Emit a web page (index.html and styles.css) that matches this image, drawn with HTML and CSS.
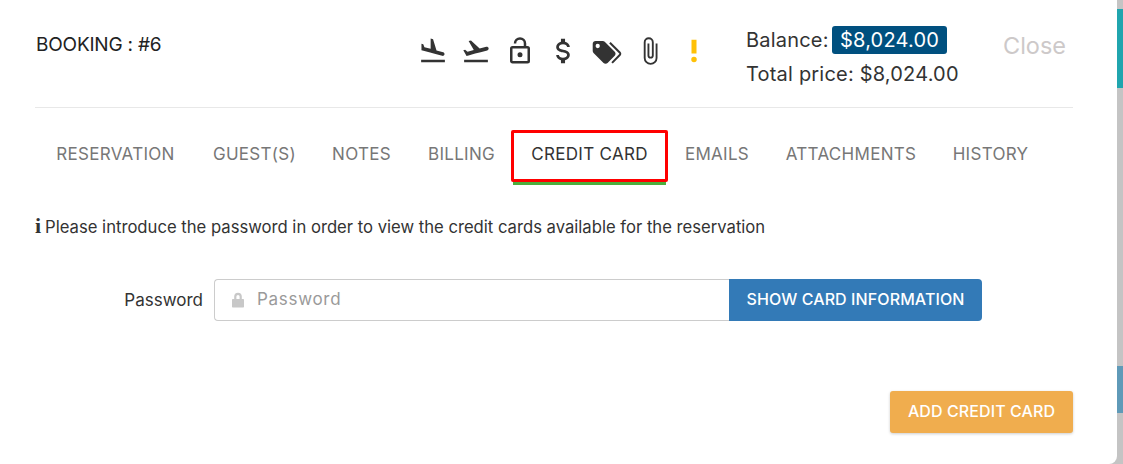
FILE: index.html
```html
<!DOCTYPE html>
<html lang="en">
<head>
    <meta charset="UTF-8">
    <title>Booking #6</title>
    <link rel="stylesheet" href="styles.css">
</head>
<body>
    <div class="page">
        <div class="modal">
            <div class="modal-header">
                <div class="booking-title">BOOKING : #6</div>
                <div class="status-icons">
                    <svg class="icon" viewBox="0 0 24 24"><path d="M2.5,19H21.5V21H2.5V19M9.68,13.27L14.03,14.43L19.34,15.85C20.14,16.06 20.96,15.59 21.18,14.79C21.39,14 20.92,13.17 20.12,12.95L14.81,11.53L12.05,2.5L10.12,2V10.28L5.15,8.95L4.22,6.63L2.77,6.24V11.41L4.37,11.84L9.68,13.27Z"/></svg>
                    <svg class="icon" viewBox="0 0 24 24"><path d="M2.5,19H21.5V21H2.5V19M22.07,9.64C21.86,8.84 21.03,8.36 20.23,8.58L14.92,10L8,3.57L6.09,4.08L10.23,11.25L5.26,12.58L3.29,11.04L1.84,11.43L3.66,14.59L4.43,15.92L6.03,15.5L11.34,14.07L15.69,12.91L21,11.5C21.81,11.26 22.28,10.44 22.07,9.64Z"/></svg>
                    <svg class="icon" viewBox="0 0 24 24"><path d="M18,20V10H6V20H18M18,8A2,2 0 0,1 20,10V20A2,2 0 0,1 18,22H6C4.89,22 4,21.1 4,20V10A2,2 0 0,1 6,8H15V6A3,3 0 0,0 12,3A3,3 0 0,0 9,6H7A5,5 0 0,1 12,1A5,5 0 0,1 17,6V8H18M12,17A2,2 0 0,1 10,15A2,2 0 0,1 12,13A2,2 0 0,1 14,15A2,2 0 0,1 12,17Z"/></svg>
                    <svg class="icon" viewBox="1 1 22 22"><path d="M7,15H9C9,16.08 10.37,17 12,17C13.63,17 15,16.08 15,15C15,13.9 13.96,13.5 11.76,12.97C9.64,12.44 7,11.78 7,9C7,7.21 8.47,5.69 10.5,5.18V3H13.5V5.18C15.53,5.69 17,7.21 17,9H15C15,7.92 13.63,7 12,7C10.37,7 9,7.92 9,9C9,10.1 10.04,10.5 12.24,11.03C14.36,11.56 17,12.22 17,15C17,16.79 15.53,18.31 13.5,18.82V21H10.5V18.82C8.47,18.31 7,16.79 7,15Z"/></svg>
                    <svg class="icon" viewBox="1.5 0.5 21 21"><path d="M5.5,9A1.5,1.5 0 0,0 7,7.5A1.5,1.5 0 0,0 5.5,6A1.5,1.5 0 0,0 4,7.5A1.5,1.5 0 0,0 5.5,9M17.41,11.58C17.77,11.94 18,12.44 18,13C18,13.55 17.78,14.05 17.41,14.41L12.41,19.41C12.05,19.77 11.55,20 11,20C10.45,20 9.95,19.78 9.58,19.41L2.59,12.42C2.22,12.05 2,11.55 2,11V6C2,4.89 2.89,4 4,4H9C9.55,4 10.05,4.22 10.41,4.58L17.41,11.58M13.54,5.71L14.54,4.71L21.41,11.58C21.78,11.94 22,12.45 22,13C22,13.55 21.78,14.05 21.42,14.41L16.04,19.79L15.04,18.79L20.75,13L13.54,5.71Z"/></svg>
                    <svg class="icon" viewBox="0 0 24 24"><path d="M16.5,6V17.5A4,4 0 0,1 12.5,21.5A4,4 0 0,1 8.5,17.5V5A2.5,2.5 0 0,1 11,2.5A2.5,2.5 0 0,1 13.5,5V15.5A1,1 0 0,1 12.5,16.5A1,1 0 0,1 11.5,15.5V6H10V15.5A2.5,2.5 0 0,0 12.5,18A2.5,2.5 0 0,0 15,15.5V5A4,4 0 0,0 11,1A4,4 0 0,0 7,5V17.5A5.5,5.5 0 0,0 12.5,23A5.5,5.5 0 0,0 18,17.5V6H16.5Z"/></svg>
                    <svg class="icon icon-warning" viewBox="0 0 24 24"><path d="M10 3H14V14H10ZM12 16.5A2.2 2.2 0 1 1 12 20.9A2.2 2.2 0 1 1 12 16.5Z"/></svg>
                </div>
                <div class="totals">
                    <div class="totals-row">Balance: <span class="balance-label">$8,024.00</span></div>
                    <div class="totals-row">Total price: $8,024.00</div>
                </div>
                <a class="close-link" href="#">Close</a>
            </div>

            <ul class="tabs">
                <li><a href="#">RESERVATION</a></li>
                <li><a href="#">GUEST(S)</a></li>
                <li><a href="#">NOTES</a></li>
                <li><a href="#">BILLING</a></li>
                <li class="active"><a href="#">CREDIT CARD</a><span class="highlight-box"></span></li>
                <li><a href="#">EMAILS</a></li>
                <li><a href="#">ATTACHMENTS</a></li>
                <li><a href="#">HISTORY</a></li>
            </ul>

            <p class="info-text"><span class="info-icon">i</span> Please introduce the password in order to view the credit cards available for the reservation</p>

            <form class="password-form">
                <label class="password-label" for="cardPassword">Password</label>
                <div class="input-group">
                    <svg class="lock-icon" viewBox="0 0 14 16"><path d="M3.2 7V4.6a3.8 3.8 0 0 1 7.6 0V7h1.2c.6 0 1 .4 1 1v6.5c0 .6-.4 1-1 1H2c-.6 0-1-.4-1-1V8c0-.6.4-1 1-1h1.2zm2.2 0h3.2V4.6a1.6 1.6 0 0 0-3.2 0V7z"/></svg>
                    <input type="password" id="cardPassword" placeholder="Password">
                </div>
                <button type="button" class="btn-show">SHOW CARD INFORMATION</button>
            </form>

            <div class="modal-actions">
                <button type="button" class="btn-add">ADD CREDIT CARD</button>
            </div>
        </div>

        <div class="backdrop-edge">
            <div class="edge-gray edge-top"></div>
            <div class="edge-teal"></div>
            <div class="edge-gray edge-middle"></div>
            <div class="edge-blue"></div>
            <div class="edge-gray edge-bottom"></div>
        </div>
    </div>
</body>
</html>
```

FILE: styles.css
```css
* {
    box-sizing: border-box;
}
body {
    font-family: "Inter", "Liberation Sans", sans-serif;
    background-color: #c4c4c4;
    color: #333;
    margin: 0;
    overflow: hidden;
}
.page {
    display: flex;
    height: 464px;
}
.modal {
    flex: 1;
    background-color: #fff;
    border-bottom-right-radius: 8px;
    padding: 0 44px 0 35px;
}
.modal-header {
    display: flex;
    height: 108px;
    border-bottom: 1px solid #e8e8e8;
}
.booking-title {
    width: 382.5px;
    padding-top: 33px;
    padding-left: 1px;
    font-size: 19px;
    letter-spacing: -0.2px;
    color: #222;
    white-space: nowrap;
}
.status-icons {
    display: flex;
    gap: 13.5px;
    padding-top: 35.5px;
}
.icon {
    width: 30px;
    height: 30px;
    fill: #333;
}
.icon-warning {
    fill: #ffc107;
}
.totals {
    margin-left: 37.5px;
    padding-top: 26px;
    width: 257px;
    font-size: 20px;
    letter-spacing: 0.2px;
}
.totals-row {
    height: 34px;
    line-height: 28px;
    white-space: nowrap;
}
.balance-label {
    display: inline-block;
    height: 28px;
    line-height: 28px;
    padding: 0 7.5px;
    margin-left: -2px;
    border-radius: 3px;
    background-color: #00507f;
    color: #fff;
}
.close-link {
    padding-top: 31px;
    font-size: 23.5px;
    color: #cdc9c9;
    text-decoration: none;
}
.tabs {
    display: grid;
    grid-template-columns: 161px 117px 97px 103px 153px 102px 166px 113px;
    list-style-type: none;
    margin: 23px 0 0;
    padding: 0;
}
.tabs li {
    position: relative;
}
.tabs li a {
    display: block;
    height: 54px;
    line-height: 46px;
    text-align: center;
    font-size: 17px;
    letter-spacing: 0.3px;
    color: #777;
    text-decoration: none;
    white-space: nowrap;
}
.tabs li.active a {
    color: #333;
    border-bottom: 4px solid #4cae3c;
}
.highlight-box {
    position: absolute;
    left: -2px;
    right: -2px;
    top: -1px;
    height: 52px;
    border: 3px solid #f00;
    border-radius: 2px;
}
.info-text {
    margin: 32px 0 0;
    height: 20px;
    line-height: 20px;
    font-size: 16.65px;
    white-space: nowrap;
}
.info-icon {
    display: inline-block;
    width: 5.4px;
    font-family: "Liberation Serif", serif;
    font-weight: bold;
    font-size: 22px;
    line-height: 18px;
}
.password-form {
    display: flex;
    margin-top: 42px;
    height: 42px;
}
.password-label {
    width: 168px;
    text-align: right;
    line-height: 42px;
    font-size: 17px;
    margin-right: 11px;
}
.input-group {
    display: flex;
    align-items: center;
    width: 515px;
    border: 1px solid #ccc;
    border-right: none;
    border-radius: 4px 0 0 4px;
}
.lock-icon {
    width: 14px;
    height: 16px;
    margin-left: 16px;
    fill: #c8c8c8;
}
.input-group input {
    flex: 1;
    border: none;
    outline: none;
    margin: 0 0 2px 12px;
    padding: 0;
    font-family: inherit;
    font-size: 17px;
    letter-spacing: 0.7px;
}
.input-group input::placeholder {
    color: #9a9a9a;
}
.btn-show, .btn-add {
    border: none;
    padding: 0 0 2px;
    color: #fff;
    font-family: inherit;
    font-size: 16px;
    font-weight: 500;
    letter-spacing: 0.1px;
    cursor: pointer;
}
.btn-show {
    width: 253px;
    background-color: #337ab7;
    border-radius: 0 4px 4px 0;
}
.modal-actions {
    display: flex;
    justify-content: flex-end;
    margin-top: 70px;
}
.btn-add {
    width: 183px;
    height: 42px;
    background-color: #f0ad4e;
    border-radius: 3px;
    box-shadow: 0 1px 3px rgba(0, 0, 0, 0.2);
}
.backdrop-edge {
    display: flex;
    flex-direction: column;
    width: 6px;
}
.edge-gray {
    background-color: #c4c4c4;
}
.edge-top {
    height: 9px;
}
.edge-teal {
    height: 79px;
    background-color: #20a5ae;
}
.edge-middle {
    height: 278px;
}
.edge-blue {
    height: 47px;
    background-color: #5f9ab8;
}
.edge-bottom {
    flex: 1;
}
```
